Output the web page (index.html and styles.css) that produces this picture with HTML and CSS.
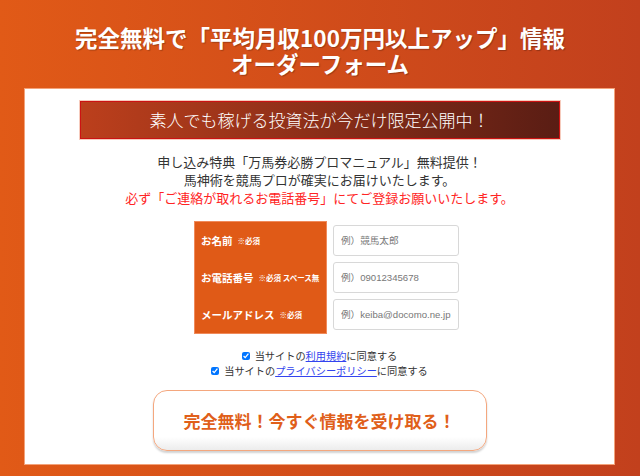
FILE: index.html
```
<!DOCTYPE html>
<html lang="ja">
<head>
    <meta charset="UTF-8">
    <meta name="viewport" content="width=device-width, initial-scale=1.0">
    <title>オーダーフォーム</title>
    <link rel="stylesheet" href="styles.css">
</head>
<body>
    <h1 class="page-title">完全無料で「平均月収100万円以上アップ」情報<br>オーダーフォーム</h1>

    <div class="form-panel">
        <div class="banner">素人でも稼げる投資法が今だけ限定公開中！</div>

        <div class="intro">
            <p>申し込み特典「万馬券必勝プロマニュアル」無料提供！</p>
            <p>馬神術を競馬プロが確実にお届けいたします。</p>
            <p class="notice">必ず「ご連絡が取れるお電話番号」にてご登録お願いいたします。</p>
        </div>

        <div class="order-form">
            <div class="labels">
                <div class="label">お名前<small>※必須</small></div>
                <div class="label">お電話番号<small>※必須 スペース無</small></div>
                <div class="label">メールアドレス<small>※必須</small></div>
            </div>
            <div class="fields">
                <input type="text" placeholder="例）競馬太郎">
                <input type="text" placeholder="例）09012345678">
                <input type="text" placeholder="例）keiba@docomo.ne.jp">
            </div>
        </div>

        <div class="agree">
            <label><input type="checkbox" checked>当サイトの<a href="#">利用規約</a>に同意する</label>
            <label><input type="checkbox" checked>当サイトの<a href="#">プライバシーポリシー</a>に同意する</label>
        </div>

        <button class="submit-btn">完全無料！今すぐ情報を受け取る！</button>
    </div>
</body>
</html>
```

FILE: styles.css
```
body {
    margin: 0;
    height: 476px;
    overflow: hidden;
    font-family: "Noto Sans CJK JP", "Noto Sans", sans-serif;
    background: linear-gradient(to right, #e15a17, #c2401d);
}
.page-title {
    margin: 0;
    padding-top: 24px;
    font-size: 22.5px;
    line-height: 26px;
    font-weight: bold;
    color: white;
    text-align: center;
    text-shadow: 1px 1px 1px rgba(0,0,0,0.25);
}
.form-panel {
    margin: 12px 25px 0 24px;
    background-color: white;
    border: 1px solid #f3a27a;
    padding: 12px 0 13px;
    display: flex;
    flex-direction: column;
    align-items: center;
}
.banner {
    width: 478px;
    height: 36px;
    line-height: 36px;
    text-align: center;
    color: white;
    font-size: 17px;
    font-weight: 300;
    background: linear-gradient(to right, #bc3f1c, #5a1d14);
    border: 1px solid #cc1212;
    box-shadow: 0 0 0 1px #f6cbbd;
}
.intro {
    margin-top: 14px;
    text-align: center;
    font-size: 13px;
    line-height: 18px;
    color: #333;
}
.intro p {
    margin: 0;
}
.intro .notice {
    color: #ff2424;
}
.order-form {
    display: flex;
    gap: 6px;
    margin-top: 14px;
    margin-left: 14px;
}
.labels {
    width: 133px;
    background-color: #e05a17;
    border: 1px solid #f08a5a;
    box-sizing: border-box;
}
.label {
    height: 37px;
    display: flex;
    align-items: center;
    padding-left: 6px;
    color: white;
    font-size: 10.5px;
    font-weight: bold;
    white-space: nowrap;
}
.label small {
    font-size: 7.5px;
    margin-left: 5px;
}
.fields {
    display: flex;
    flex-direction: column;
    gap: 6px;
    padding-top: 4px;
}
.fields input {
    width: 126px;
    height: 31px;
    box-sizing: border-box;
    border: 1px solid #d8d8d8;
    border-radius: 3px;
    padding: 0 2px 0 7px;
    font-family: "Liberation Sans", "Noto Sans CJK JP", sans-serif;
    font-size: 9.6px;
}
.fields input::placeholder {
    color: #777;
}
.agree {
    margin-top: 14px;
    display: flex;
    flex-direction: column;
    align-items: center;
    font-size: 10.2px;
    line-height: 15px;
    color: #333;
}
.agree label {
    display: flex;
    align-items: center;
}
.agree input {
    width: 8px;
    height: 8px;
    margin: 0 5px 0 0;
}
.agree a {
    color: #3344ee;
}
.submit-btn {
    margin-top: 12px;
    width: 334px;
    height: 61px;
    border: 1px solid #f4a77e;
    border-radius: 14px;
    background: linear-gradient(#fff 78%, #ececec);
    box-shadow: 0 2px 2px rgba(0,0,0,0.18);
    color: #e05f1a;
    font-family: inherit;
    font-size: 17px;
    font-weight: bold;
    cursor: pointer;
}
```
